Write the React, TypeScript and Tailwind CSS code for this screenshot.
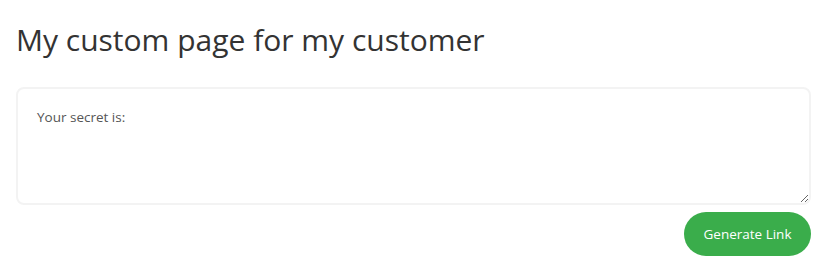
import React from "react";

export default function App() {
  return (
    <div className="pl-4 pr-[13px] pt-[20px] font-['Open_Sans',sans-serif]">
      <h1 className="text-[30px] leading-[40px] text-[#333333]">My custom page for my customer</h1>
      <div className="mt-[27px] flex flex-col">
        <textarea
          readOnly
          defaultValue="Your secret is:"
          className="h-[118px] w-full rounded-lg border-2 border-[#f3f3f3] bg-white pl-[19px] pr-5 pt-[18px] pb-5 text-[13.5px] leading-[20px] text-[#555555] outline-none"
        />
        <div className="mt-[7px] flex justify-end">
          <button className="h-11 w-[127px] rounded-full bg-[#3aad4b] text-[13.5px] text-white">
            Generate Link
          </button>
        </div>
      </div>
    </div>
  );
}
